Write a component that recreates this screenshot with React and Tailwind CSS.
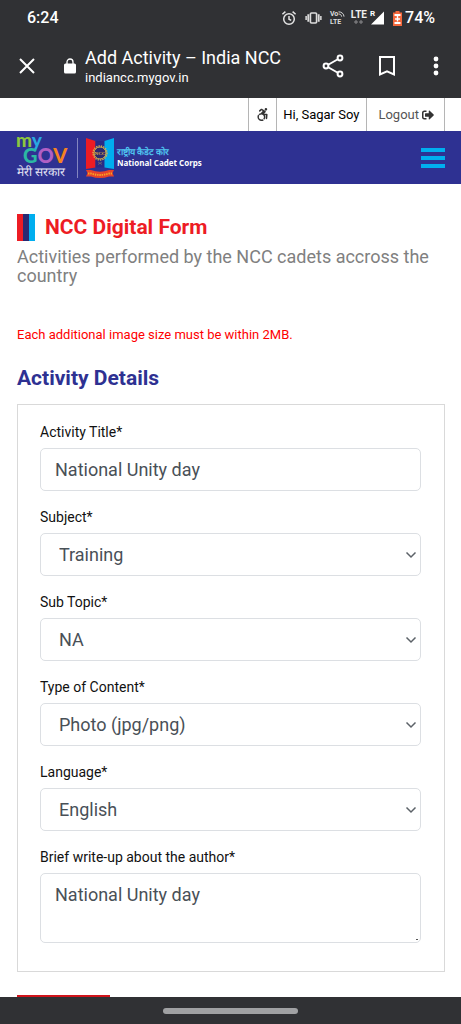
import { useState } from "react"
import { FaSignOutAlt } from "react-icons/fa"
import { FaAccessibleIcon } from "react-icons/fa6"

const selects = [
  { id: "subject", label: "Subject*", options: ["Training", "Camp", "Adventure"] },
  { id: "subTopic", label: "Sub Topic*", options: ["NA"] },
  { id: "contentType", label: "Type of Content*", options: ["Photo (jpg/png)", "Video", "Text"] },
  { id: "language", label: "Language*", options: ["English", "Hindi"] }
]

function StatusBar() {
  return (
    <div className="flex h-9 items-center justify-between pl-[27px] pr-[26px]">
      <span className="text-base font-medium">6:24</span>

      <div className="flex items-center">
        <svg width="16" height="16" viewBox="0 0 16 16" fill="none" stroke="#e4e4e4" strokeWidth="1.5">
          <circle cx="8" cy="9" r="5.3" />
          <path d="M8 6v3.2l2.2 1.2M1.4 4.2 4.4 1.6M14.6 4.2l-3-2.6" />
        </svg>

        <svg className="ml-2" width="17" height="14" viewBox="0 0 18 14" fill="none" stroke="#dcdcdc">
          <rect x="5.7" y="1.7" width="6.6" height="10.6" rx="1.2" strokeWidth="1.8" />
          <path d="M3.4 3v8M14.6 3v8" strokeWidth="1.8" />
          <path d="M1.2 5v4M16.8 5v4" strokeWidth="1.6" />
        </svg>

        <div className="ml-2 w-4 text-[7px] leading-[8px] font-bold text-[#dcdcdc]">
          <div className="flex items-center">
            Vo
            <svg width="7" height="6" viewBox="0 0 7 6" fill="none" stroke="#dcdcdc" strokeWidth="1">
              <path d="M.5.8C3.6.8 6 3 6 5.6M.5 3C2.3 3 3.6 4.2 3.6 5.6" />
            </svg>
          </div>
          <div>LTE</div>
        </div>

        <div className="ml-1 flex h-[18px] w-[18px] flex-col items-center text-[#eeeeee]">
          <span className="text-[10px] leading-[11px] font-bold">LTE</span>
          <svg width="9" height="4" viewBox="0 0 9 4" stroke="#8b8b8d" strokeWidth="1">
            <path d="M0 2h4M2 0v4M5 2h4M7 0v4" />
          </svg>
        </div>

        <div className="ml-0.5 flex h-4 items-start">
          <span className="text-[8px] leading-[8px] font-bold">R</span>
          <svg className="-ml-1 mt-px" width="13" height="14" viewBox="0 0 14 14">
            <path d="M14 0v14H0z" fill="#fff" />
          </svg>
        </div>

        <svg className="ml-2" width="11" height="15" viewBox="0 0 11 15">
          <path d="M3.5 0h4v1.5H10V15H1V1.5h2.5z" fill="#f4683c" />
          <path d="M2.5 3h6v2h-6zM2.5 11h6v2h-6z" fill="#fff" />
          <path d="M5.5 5v5.5M3 8h5" stroke="#fff" strokeWidth="1.4" />
        </svg>
        <span className="ml-0.5 text-base font-medium">74%</span>
      </div>
    </div>
  )
}

function BrowserBar() {
  return (
    <div className="flex h-[62px] items-center pr-[19px] pb-0.5 pl-[19px]">
      <button aria-label="Close">
        <svg width="16" height="16" viewBox="0 0 16 16" stroke="#fff" strokeWidth="2">
          <path d="M1 1l14 14M15 1 1 15" />
        </svg>
      </button>

      <svg className="ml-[29px]" width="12" height="16" viewBox="0 0 12 16" fill="none">
        <rect x="0" y="5.5" width="12" height="10" rx="1.5" fill="#fff" />
        <path d="M3 6V4a3 3 0 0 1 6 0v2" stroke="#fff" strokeWidth="1.3" />
      </svg>

      <div className="ml-[9px] flex-1 whitespace-nowrap">
        <div className="text-lg leading-6">Add Activity – India NCC</div>
        <div className="text-[13px] leading-4">indiancc.mygov.in</div>
      </div>

      <div className="flex items-center">
        <button aria-label="Share">
          <svg width="22" height="24" viewBox="0 0 22 24" fill="none" stroke="#fff" strokeWidth="2">
            <path d="M4 12 18 4M4 12l14 8" />
            <circle cx="4" cy="12" r="2.4" fill="#303134" />
            <circle cx="18" cy="4" r="2.4" fill="#303134" />
            <circle cx="18" cy="20" r="2.4" fill="#303134" />
          </svg>
        </button>
        <button aria-label="Bookmark" className="ml-[34px]">
          <svg width="18" height="22" viewBox="0 0 18 22" fill="none" stroke="#fff" strokeWidth="2">
            <path d="M2 2h14v17.5l-7-3.2-7 3.2z" />
          </svg>
        </button>
        <button aria-label="More" className="ml-[34px]">
          <svg width="12" height="20" viewBox="0 0 12 20" fill="#fff">
            <circle cx="6" cy="3" r="2.4" />
            <circle cx="6" cy="10" r="2.4" />
            <circle cx="6" cy="17" r="2.4" />
          </svg>
        </button>
      </div>
    </div>
  )
}

function MyGovLogo() {
  return (
    <svg width="52" height="51" viewBox="0 0 52 51">
      <text x="0" y="15" fontSize="19" fontWeight="900" fontFamily="Lato, sans-serif">
        <tspan fill="#8cc63f">m</tspan>
        <tspan fill="#29a9e0">y</tspan>
      </text>
      <text x="7" y="31" fontSize="20" fontWeight="900" fontFamily="Lato, sans-serif">
        <tspan fill="#2bb8a3">G</tspan>
        <tspan fill="#b05fc4">O</tspan>
        <tspan fill="#f58220">V</tspan>
      </text>
      <text x="1" y="44" fontSize="12" fill="#e4e4f4">मेरी सरकार</text>
    </svg>
  )
}

function NccCrest() {
  return (
    <svg width="30" height="40" viewBox="0 0 30 40">
      <path d="M1 0 10.5 3v26.500L1 31z" fill="#ed1c24" />
      <path d="M10.5 3h9v26.500h-9z" fill="#2a2a86" />
      <path d="M29 0l-9.500 3v26.500L29 31z" fill="#00aeef" />
      <circle cx="15" cy="15" r="6" fill="#2a2a6e" stroke="#d9b04a" strokeWidth="1" />
      <circle cx="15" cy="15" r="7" fill="none" stroke="#d9b04a" strokeWidth="1.4" strokeDasharray="1.4 1" />
      <text x="15" y="17" textAnchor="middle" fontSize="5" fontWeight="700" fill="#e8b93a" fontFamily="Liberation Serif, serif">NCC</text>
      <path d="M13 24l4 2.500M17 24l-4 2.500" stroke="#8c7a6a" strokeWidth="0.6" />
      <path d="M1 32h5q9 3.500 18 0h5l-1.500 3 1.500 3.500h-5q-9 3-18 0H1L2.500 35z" fill="#e6432b" />
      <path d="M3 35.500h3q9 3 18 0h3" fill="none" stroke="#f7a823" strokeWidth="1.8" strokeDasharray="1.4 0.9" />
    </svg>
  )
}

function SiteHeader() {
  return (
    <header>
      <div className="flex h-[33px] justify-end pr-4 text-[13px] text-black">
        <button aria-label="Accessibility" className="w-7 border-l border-[#b5b5b5] text-[#333333]">
          <FaAccessibleIcon className="mx-auto" size={13} />
        </button>
        <a href="#profile" className="flex items-center border-l border-[#b5b5b5] pr-[7px] pl-1.5">Hi, Sagar Soy</a>
        <a href="#logout" className="flex items-center gap-[3px] border-x border-[#b5b5b5] pr-[10px] pl-[11px] text-[#555555]">
          Logout
          <FaSignOutAlt size={12} className="text-[#333333]" />
        </a>
      </div>

      <div className="flex h-[53px] items-center justify-between bg-[#2e3192] px-4">
        <a href="#home" className="flex items-center">
          <MyGovLogo />
          <div className="ml-[9px] h-10 w-px bg-[#8385c0]" />
          <div className="ml-[7px]">
            <NccCrest />
          </div>
          <div className="ml-0.5 whitespace-nowrap">
            <div className="text-[9px] leading-[10px] font-bold text-[#4fc4f0]">राष्ट्रीय कैडेट कोर</div>
            <div className="font-['Open_Sans',sans-serif] text-[8px] leading-[11px] font-bold text-white">National Cadet Corps</div>
          </div>
        </a>

        <button aria-label="Menu" className="flex w-6 flex-col gap-1">
          <span className="h-1 w-full bg-[#00aeef]" />
          <span className="h-1 w-full bg-[#00aeef]" />
          <span className="h-1 w-full bg-[#00aeef]" />
        </button>
      </div>
    </header>
  )
}

function App() {

  const [title, setTitle] = useState("National Unity day")
  const [about, setAbout] = useState("National Unity day")

  return (

    <div className="flex h-screen flex-col bg-white font-[Roboto,sans-serif] text-[#111111]">

      <div className="shrink-0 bg-[#303134] text-white">
        <StatusBar />
        <BrowserBar />
      </div>

      <div className="min-h-0 flex-1 overflow-hidden">

        <SiteHeader />

        <main className="pt-[30px] pr-4 pl-[17px]">

          <div className="flex items-center gap-[10px]">
            <div className="flex h-[27px] w-[18px]">
              <span className="flex-1 bg-[#ed1c24]" />
              <span className="flex-1 bg-[#2a2a72]" />
              <span className="flex-1 bg-[#00aeef]" />
            </div>
            <h1 className="text-[21px] leading-[27px] font-bold text-[#ed1c24]">NCC Digital Form</h1>
          </div>

          <p className="mt-1.5 text-lg leading-[19px] text-[#808080]">
            Activities performed by the NCC cadets accross the country
          </p>

          <p className="mt-10 text-[13px] leading-5 text-[#ff0000]">
            Each additional image size must be within 2MB.
          </p>

          <h2 className="mt-5 text-[21px] leading-[26px] font-bold text-[#2e3192]">Activity Details</h2>

          <form className="mt-[13px] flex flex-col gap-3.5 border border-[#d9d9d9] pt-[15px] pr-[23px] pb-7 pl-[22px]">

            <div>
              <label htmlFor="title" className="block h-7 text-sm leading-6">Activity Title*</label>
              <input
                id="title"
                value={title}
                onChange={e => setTitle(e.target.value)}
                className="block h-[43px] w-full rounded-[5px] border border-[#dcdfe3] px-3.5 text-lg text-[#495057]"
              />
            </div>

            {selects.map(item => (
              <div key={item.id}>
                <label htmlFor={item.id} className="block h-7 text-sm leading-6">{item.label}</label>
                <div className="relative">
                  <select
                    id={item.id}
                    className="block h-[43px] w-full appearance-none rounded-[5px] border border-[#dcdfe3] bg-white px-[18px] text-lg text-[#495057]"
                  >
                    {item.options.map(option => (
                      <option key={option}>{option}</option>
                    ))}
                  </select>
                  <svg
                    className="pointer-events-none absolute inset-y-0 right-1 my-auto"
                    width="12" height="8" viewBox="0 0 12 8" fill="none" stroke="#5c6268" strokeWidth="1.5"
                  >
                    <path d="M1.5 1.5 6 6l4.5-4.5" />
                  </svg>
                </div>
              </div>
            ))}

            <div>
              <label htmlFor="about" className="block h-7 text-sm leading-6">Brief write-up about the author*</label>
              <div className="relative">
                <textarea
                  id="about"
                  value={about}
                  onChange={e => setAbout(e.target.value)}
                  className="block h-[70px] w-full resize-none rounded-[5px] border border-[#dcdfe3] px-3.5 py-[7px] text-lg leading-7 text-[#495057]"
                />
                <span className="absolute right-[3px] bottom-[3px] h-px w-0.5 bg-[#555555]" />
              </div>
            </div>

          </form>

          <button aria-label="Next" className="mt-[23px] block h-10 w-[93px] bg-[#d0141b]" />

        </main>

      </div>

      <div className="flex h-[27px] shrink-0 items-center justify-center bg-[#303134]">
        <div className="h-1.5 w-[135px] rounded-full bg-[#a0a1a3]" />
      </div>

    </div>

  )

}

export default App
